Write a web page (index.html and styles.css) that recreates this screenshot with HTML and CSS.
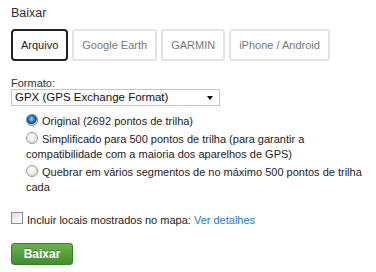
FILE: index.html
```html
<!DOCTYPE html>
<html lang="pt">
<head>
<meta charset="utf-8">
<link rel="stylesheet" href="styles.css">
</head>
<body>
<div class="panel">
  <h2 class="title">Baixar</h2>
  <div class="tabs">
    <div class="tab active">Arquivo</div>
    <div class="tab">Google Earth</div>
    <div class="tab">GARMIN</div>
    <div class="tab">iPhone / Android</div>
  </div>
  <div class="label">Formato:</div>
  <div class="select"><span class="select-text">GPX (GPS Exchange Format)</span><span class="caret"></span></div>
  <div class="options">
    <div class="option"><span class="radio checked"></span>Original (2692 pontos de trilha)</div>
    <div class="option"><span class="radio"></span>Simplificado para 500 pontos de trilha (para garantir a compatibilidade com a maioria dos aparelhos de GPS)</div>
    <div class="option"><span class="radio"></span>Quebrar em vários segmentos de no máximo 500 pontos de trilha cada</div>
  </div>
  <div class="check-row"><span class="checkbox"></span>Incluir locais mostrados no mapa: <a class="link" href="#">Ver detalhes</a></div>
  <div class="actions"><button class="btn">Baixar</button></div>
</div>
</body>
</html>
```

FILE: styles.css
```css
html, body {
  margin: 0;
  padding: 0;
  background: #fff;
}
body {
  font-family: "Liberation Sans", Arial, sans-serif;
  color: #222;
}
.panel {
  padding: 5px 8px 0 11px;
}
.title {
  margin: 0;
  font-size: 12.5px;
  line-height: 16px;
  font-weight: normal;
  color: #333;
}
.tabs {
  display: flex;
  gap: 4px;
  margin-top: 8px;
}
.tab {
  box-sizing: border-box;
  height: 32px;
  display: flex;
  align-items: center;
  padding: 0 8px;
  border: 2px solid #e4e4e4;
  border-radius: 3px;
  font-size: 11px;
  color: #777;
}
.tab.active {
  border-color: #222;
  border-radius: 4px;
  color: #222;
}
.label {
  margin-top: 16px;
  font-size: 11px;
  line-height: 12px;
  color: #333;
}
.select {
  width: 209px;
  box-sizing: border-box;
  height: 17px;
  border: 1px solid #c4c4c4;
  display: flex;
  align-items: center;
  justify-content: space-between;
  padding: 0 6px 0 3px;
  font-size: 11.5px;
  line-height: 15px;
  color: #111;
}
.caret {
  width: 0;
  height: 0;
  border-left: 3.5px solid transparent;
  border-right: 3.5px solid transparent;
  border-top: 4px solid #000;
}
.options {
  margin-top: 8px;
  margin-left: 15px;
  display: flex;
  flex-direction: column;
  gap: 3px;
  font-size: 11px;
  line-height: 15px;
}
.radio {
  display: inline-block;
  box-sizing: border-box;
  width: 12px;
  height: 12px;
  border-radius: 50%;
  border: 1px solid #9a9a9a;
  background: radial-gradient(circle at 40% 35%, #ffffff 0%, #eeeeee 45%, #cfcfcf 100%);
  vertical-align: -1px;
  margin-right: 4px;
}
.radio.checked {
  border-color: #6b7f95;
  background: radial-gradient(circle at 45% 40%, #9fd0ff 0%, #2f7fd0 35%, #0d3f7a 60%, #e6e6e6 66%, #f6f6f6 100%);
}
.check-row {
  margin-top: 17px;
  font-size: 11px;
  line-height: 15px;
  color: #222;
}
.checkbox {
  display: inline-block;
  box-sizing: border-box;
  width: 12px;
  height: 12px;
  border: 1px solid #8f8f8f;
  background: linear-gradient(135deg, #dcdcdc 0%, #f4f4f4 60%, #ffffff 100%);
  vertical-align: 0;
  margin-right: 4px;
}
.link {
  color: #1f78d1;
  text-decoration: none;
}
.actions {
  margin-top: 15px;
}
.btn {
  box-sizing: border-box;
  height: 22px;
  width: 62px;
  padding: 0;
  border: 1px solid #3b7e2b;
  border-radius: 3px;
  background: linear-gradient(#6bb24d, #3e8e2c);
  color: #fff;
  font-family: "Liberation Sans", Arial, sans-serif;
  font-weight: bold;
  font-size: 12px;
  text-shadow: 0 -1px 0 rgba(0, 0, 0, 0.25);
}
```
